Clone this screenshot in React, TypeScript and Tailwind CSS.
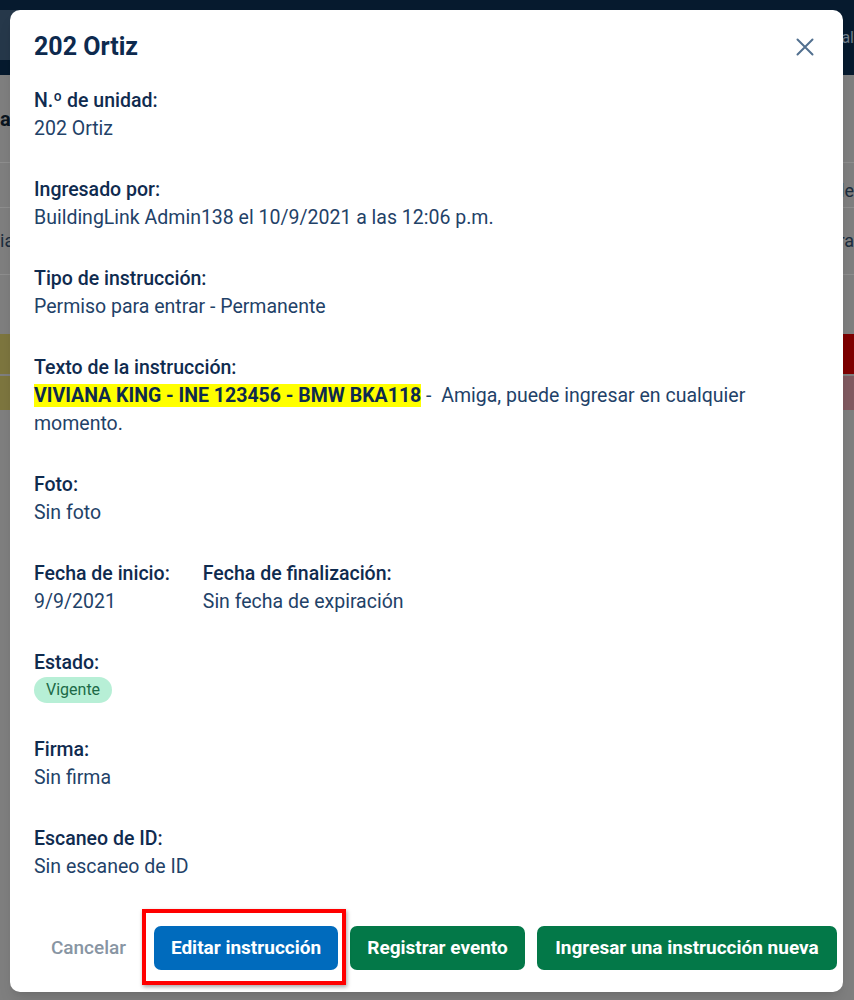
import React from "react";

interface Field {
  label: string;
  value: React.ReactNode;
}

const fields: Field[] = [
  { label: "N.º de unidad:", value: "202 Ortiz" },
  {
    label: "Ingresado por:",
    value: "BuildingLink Admin138 el 10/9/2021 a las 12:06 p.m.",
  },
  { label: "Tipo de instrucción:", value: "Permiso para entrar - Permanente" },
  {
    label: "Texto de la instrucción:",
    value: (
      <>
        <span className="bg-[#ffff00] font-bold text-[#0d2a4e]">
          VIVIANA KING - INE 123456 - BMW BKA118
        </span>
        <span>{"\u00a0-\u00a0 Amiga, puede ingresar en cualquier momento."}</span>
      </>
    ),
  },
  { label: "Foto:", value: "Sin foto" },
];

const lowerFields: Field[] = [
  { label: "Firma:", value: "Sin firma" },
  { label: "Escaneo de ID:", value: "Sin escaneo de ID" },
];

function Section({ label, value }: Field) {
  return (
    <div>
      <div className="font-medium text-[#0f2b4f]">{label}</div>
      <div className="text-[#1f4268]">{value}</div>
    </div>
  );
}

// what's left of the page behind the dimmed overlay
function Backdrop() {
  return (
    <div className="flex h-full flex-col bg-[#7f7f7f]">
      <div className="flex h-[75px] shrink-0 items-start justify-between bg-[#061a2e] pt-[10px]">
        <div className="h-[50px] w-[30px] bg-[#26384a]"></div>
        <span className="mt-[14px] text-[16px] text-[#6f7d8a]">al</span>
      </div>
      <div className="flex h-[88px] items-center justify-between border-b border-[#8e8e8e]">
        <span className="text-[20px] font-bold text-[#0a1520]">ar</span>
        <span></span>
      </div>
      <div className="flex h-[45px] items-end justify-between border-b border-[#8e8e8e] pb-[2px]">
        <span></span>
        <span className="text-[18px] text-[#1b2c3d]">le</span>
      </div>
      <div className="flex h-[67px] items-center justify-between border-b border-[#8e8e8e]">
        <span className="text-[18px] text-[#1b2c3d]">ia</span>
        <span className="text-[18px] text-[#1b2c3d]">ra</span>
      </div>
      <div className="h-[59px]"></div>
      <div className="flex flex-col gap-[2px]">
        <div className="flex justify-between">
          <div className="h-[40px] w-[20px] rounded-r-[6px] bg-[#7d763f]"></div>
          <div className="h-[40px] w-[20px] bg-[#7f0000]"></div>
        </div>
        <div className="flex justify-between">
          <div className="h-[34px] w-[20px] rounded-r-[6px] bg-[#7d763f]"></div>
          <div className="h-[34px] w-[20px] bg-[#805a60]"></div>
        </div>
      </div>
    </div>
  );
}

export default function App() {
  return (
    <div
      className="relative h-[1000px] w-[854px] overflow-hidden text-[19.5px] leading-[28px]"
      style={{ fontFamily: "Roboto, 'Noto Sans', Arial, sans-serif" }}
    >
      <Backdrop />

      {/* modal */}
      <div className="absolute left-[10px] top-[10px] flex h-[982px] w-[833px] flex-col rounded-[10px] bg-white pb-[22px] pl-[24px] pr-[6px] pt-[21px] shadow-lg">
        <div className="flex items-center justify-between pr-[16px]">
          <h2 className="text-[25px] font-bold leading-[32px] text-[#0d2a4e]">
            202 Ortiz
          </h2>
          <button className="flex h-[32px] w-[32px] items-center justify-center text-[#52708f]">
            <svg width="18" height="18" viewBox="0 0 18 18" fill="none">
              <path
                d="M1.5 1.5 L16.5 16.5 M16.5 1.5 L1.5 16.5"
                stroke="currentColor"
                strokeWidth="2"
                strokeLinecap="round"
              />
            </svg>
          </button>
        </div>

        <div className="mt-[24px] flex flex-col gap-[33px] pr-[18px]">
          {fields.map((f, i) => (
            <Section key={i} label={f.label} value={f.value} />
          ))}

          <div className="flex gap-[33px]">
            <Section label="Fecha de inicio:" value="9/9/2021" />
            <Section label="Fecha de finalización:" value="Sin fecha de expiración" />
          </div>

          <div>
            <div className="font-medium text-[#0f2b4f]">Estado:</div>
            <div className="flex">
              <span className="rounded-full bg-[#b7efd6] px-[12px] text-[16px] leading-[26px] text-[#1c6a47]">
                Vigente
              </span>
            </div>
          </div>

          {lowerFields.map((f, i) => (
            <Section key={i} label={f.label} value={f.value} />
          ))}
        </div>

        <div className="mt-auto flex items-center justify-end gap-[12px] whitespace-nowrap text-[19px]">
          <button className="h-[44px] shrink-0 px-[16px] font-medium text-[#8895a3]">
            Cancelar
          </button>
          <div className="relative shrink-0">
            <button className="h-[44px] w-[184px] rounded-[7px] bg-[#006bbd] font-bold text-white">
              Editar instrucción
            </button>
            <div className="pointer-events-none absolute -bottom-[15px] -left-[12px] -right-[8px] -top-[17px] border-[4px] border-[#ff0000] shadow-[1px_2px_4px_rgba(0,0,0,0.35)]"></div>
          </div>
          <button className="h-[44px] w-[175px] shrink-0 rounded-[7px] bg-[#037848] font-bold text-white">
            Registrar evento
          </button>
          <button className="h-[44px] w-[300px] shrink-0 rounded-[7px] bg-[#037848] font-bold text-white">
            Ingresar una instrucción nueva
          </button>
        </div>
      </div>
    </div>
  );
}
